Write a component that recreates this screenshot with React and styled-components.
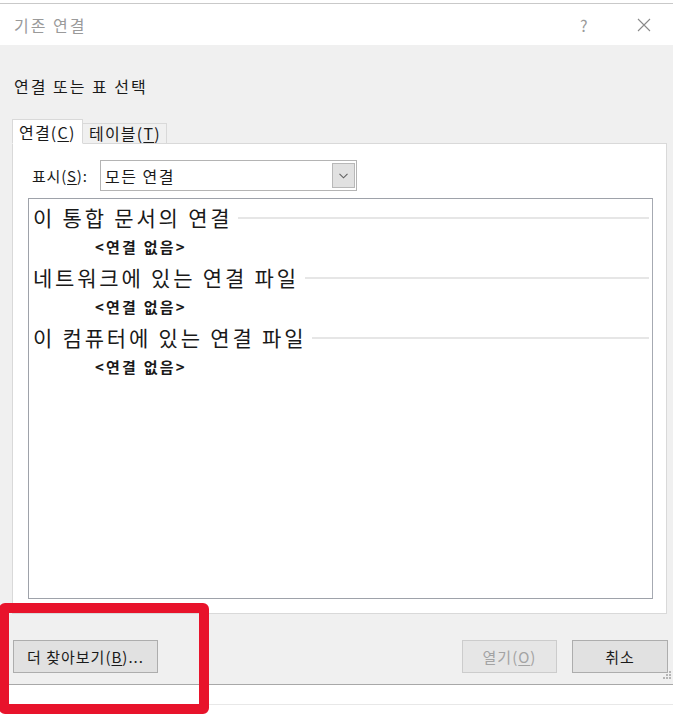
import React from "react";
import styled, { createGlobalStyle } from "styled-components";

const GlobalStyle = createGlobalStyle`
  html, body {
    margin: 0;
    padding: 0;
    background: #ffffff;
  }
  body {
    font-family: "Noto Sans CJK KR", "Noto Sans", sans-serif;
    color: #1a1a1a;
  }
`;

const Page = styled.div`
  position: relative;
  width: 673px;
  height: 719px;
  overflow: hidden;
  display: flex;
  flex-direction: column;
  background: #ffffff;
`;

const TopStrip = styled.div`
  height: 3px;
  border-bottom: 1px solid #c9c9c9;
  background: #ffffff;
`;

const TitleBar = styled.div`
  height: 41px;
  display: flex;
  align-items: center;
  padding-left: 14px;
  background: #ffffff;
`;

const TitleText = styled.div`
  flex: 1;
  font-size: 16px;
  letter-spacing: 2px;
  color: #9a9a9a;
`;

const HelpMark = styled.div`
  width: 57px;
  font-size: 16px;
  color: #9a9a9a;
`;

const CloseMark = styled.svg`
  width: 14px;
  height: 14px;
  margin-right: 22px;
`;

const Body = styled.div`
  background: #f0f0f0;
  padding: 31px 0 11px 12px;
  display: flex;
  flex-direction: column;
`;

const SectionTitle = styled.div`
  font-size: 16px;
  line-height: 20px;
  letter-spacing: 2px;
  padding-left: 2px;
  color: #1a1a1a;
`;

const TabRow = styled.div`
  margin-top: 23px;
  display: flex;
  align-items: flex-end;
  height: 25px;
  margin-bottom: -1px;
  position: relative;
  z-index: 1;
`;

const Tab = styled.div`
  box-sizing: border-box;
  height: ${(p) => (p.active ? "25px" : "21px")};
  width: ${(p) => (p.active ? "71px" : "84px")};
  border: 1px solid #d9d9d9;
  border-bottom: ${(p) => (p.active ? "1px solid #ffffff" : "1px solid #d9d9d9")};
  border-left: ${(p) => (p.active ? "1px solid #d9d9d9" : "none")};
  background: ${(p) => (p.active ? "#ffffff" : "#f0f0f0")};
  font-size: 16px;
  letter-spacing: 1.2px;
  line-height: ${(p) => (p.active ? "24px" : "19px")};
  padding-left: 6px;
  color: #1a1a1a;
  white-space: nowrap;
`;

const U = styled.span`
  text-decoration: underline;
  text-underline-offset: 2px;
`;

const Panel = styled.div`
  box-sizing: border-box;
  width: 655px;
  height: 471px;
  background: #ffffff;
  border: 1px solid #d9d9d9;
  padding: 16px 13px 14px 15px;
  display: flex;
  flex-direction: column;
`;

const FilterRow = styled.div`
  display: flex;
  align-items: center;
  height: 31px;
`;

const FilterLabel = styled.div`
  width: 68px;
  padding-left: 4px;
  font-size: 15px;
  letter-spacing: 0.8px;
  color: #1a1a1a;
`;

const Select = styled.div`
  box-sizing: border-box;
  width: 257px;
  height: 31px;
  border: 1px solid #b4b4b4;
  display: flex;
  align-items: center;
  padding: 0 1px 0 4px;
`;

const SelectValue = styled.div`
  flex: 1;
  font-size: 16px;
  letter-spacing: 1.5px;
  color: #1a1a1a;
`;

const DropButton = styled.div`
  box-sizing: border-box;
  width: 23px;
  height: 25px;
  background: #e1e1e1;
  border: 1px solid #b8b8b8;
  display: flex;
  align-items: center;
  justify-content: center;
`;

const ListBox = styled.div`
  box-sizing: border-box;
  margin-top: 7px;
  flex: 1;
  border: 1px solid #9ea2aa;
  border-right-color: #a6aab2;
  padding-top: 3px;
  display: flex;
  flex-direction: column;
`;

const GroupHeader = styled.div`
  display: flex;
  align-items: center;
  height: 30px;
  padding-left: 4px;
  padding-right: 3px;
`;

const GroupTitle = styled.div`
  font-size: 21px;
  letter-spacing: 2.8px;
  color: #1a1a1a;
  white-space: nowrap;
`;

const GroupRule = styled.div`
  flex: 1;
  height: 2px;
  margin-left: 6px;
  margin-top: 1px;
  background: #e6e6e6;
`;

const EmptyItem = styled.div`
  height: 30px;
  line-height: 30px;
  padding-left: 66px;
  font-size: 15px;
  font-weight: 700;
  letter-spacing: 2.2px;
  color: #1a1a1a;
`;

const Footer = styled.div`
  margin-top: 26px;
  display: flex;
  align-items: center;
  padding-left: 1px;
`;

const Button = styled.div`
  box-sizing: border-box;
  height: 33px;
  width: ${(p) => p.width}px;
  margin-left: ${(p) => p.gap || 0}px;
  background: ${(p) => (p.disabled ? "#e6e6e6" : "#e1e1e1")};
  border: 1px solid ${(p) => (p.disabled ? "#cccccc" : "#adadad")};
  color: ${(p) => (p.disabled ? "#a3a3a3" : "#1a1a1a")};
  font-size: 15px;
  letter-spacing: 1px;
  display: flex;
  align-items: center;
  justify-content: center;
  white-space: nowrap;
`;

const Spacer = styled.div`
  flex: 1;
`;

const Grip = styled.svg`
  position: absolute;
  right: 1px;
  top: 670px;
  width: 12px;
  height: 12px;
`;

const BelowArea = styled.div`
  flex: 1;
  border-top: 1px solid #a8a8a8;
  background: #ffffff;
`;

const FaintLine = styled.div`
  margin-top: 19px;
  height: 1px;
  background: #e8e8e8;
`;

const Highlight = styled.div`
  position: absolute;
  left: -1px;
  top: 603px;
  width: 210px;
  height: 111px;
  box-sizing: border-box;
  border: 10px solid #e8132b;
  border-radius: 6px;
  pointer-events: none;
`;

const groups = ["이 통합 문서의 연결", "네트워크에 있는 연결 파일", "이 컴퓨터에 있는 연결 파일"];

export default function App() {
  return (
    <Page>
      <GlobalStyle />
      <TopStrip />
      <TitleBar>
        <TitleText>기존 연결</TitleText>
        <HelpMark>?</HelpMark>
        <CloseMark viewBox="0 0 14 14">
          <path d="M1 1 L13 13 M13 1 L1 13" stroke="#8a8a8a" strokeWidth="1.1" fill="none" />
        </CloseMark>
      </TitleBar>
      <Body>
        <SectionTitle>연결 또는 표 선택</SectionTitle>
        <TabRow>
          <Tab active>
            연결(<U>C</U>)
          </Tab>
          <Tab>
            테이블(<U>T</U>)
          </Tab>
        </TabRow>
        <Panel>
          <FilterRow>
            <FilterLabel>
              표시(<U>S</U>):
            </FilterLabel>
            <Select>
              <SelectValue>모든 연결</SelectValue>
              <DropButton>
                <svg width="9" height="6" viewBox="0 0 9 6">
                  <path d="M0.5 0.8 L4.5 4.8 L8.5 0.8" stroke="#606060" strokeWidth="1.1" fill="none" />
                </svg>
              </DropButton>
            </Select>
          </FilterRow>
          <ListBox>
            {groups.map((g) => (
              <React.Fragment key={g}>
                <GroupHeader>
                  <GroupTitle>{g}</GroupTitle>
                  <GroupRule />
                </GroupHeader>
                <EmptyItem>&lt;연결 없음&gt;</EmptyItem>
              </React.Fragment>
            ))}
          </ListBox>
        </Panel>
        <Footer>
          <Button width={145}>
            더 찾아보기(<U>B</U>)...
          </Button>
          <Spacer />
          <Button width={95} disabled>
            열기(<U>O</U>)
          </Button>
          <Button width={96} gap={15}>
            취소
          </Button>
          <div style={{ width: 5 }} />
        </Footer>
      </Body>
      <BelowArea>
        <FaintLine />
      </BelowArea>
      <Grip viewBox="0 0 12 12">
        {[
          [9, 1],
          [6, 4],
          [9, 4],
          [3, 7],
          [6, 7],
          [9, 7],
        ].map(([x, y]) => (
          <rect key={`${x}-${y}`} x={x} y={y} width="2" height="2" fill="#b5b5b5" />
        ))}
      </Grip>
      <Highlight />
    </Page>
  );
}
